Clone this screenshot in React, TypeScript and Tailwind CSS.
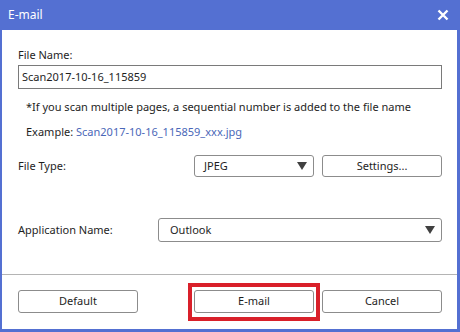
import React from "react";

const font = { fontFamily: '"Noto Sans", "Open Sans", sans-serif' };

function Arrow() {
  return (
    <svg width="10" height="8" viewBox="0 0 10 8">
      <polygon points="0,0 10,0 5,8" fill="#404040" />
    </svg>
  );
}

export default function App() {
  return (
    <div
      className="w-[460px] h-[332px] bg-[#5470d2] flex flex-col text-[11px] text-[#1e1e1e] overflow-hidden whitespace-nowrap"
      style={font}
    >
      <div className="h-[30px] flex items-center justify-between pl-[8px] pr-[11px] text-white text-[12px]">
        <span>E-mail</span>
        <svg width="12" height="12" viewBox="0 0 12 12">
          <path d="M1.5 1.5 L10.5 10.5 M10.5 1.5 L1.5 10.5" stroke="white" strokeWidth="2.4" />
        </svg>
      </div>
      <div className="flex-1 bg-white ml-[2px] mr-[3px] mb-[3px] flex flex-col">
        <div className="pl-[16px] pr-[15px] flex flex-col">
          <div className="mt-[17px] h-[16px] leading-[16px]">File Name:</div>
          <div className="mt-[2px] h-[24px] border border-[#7a7a7a] flex items-center pl-[3px]">
            Scan2017-10-16_115859
          </div>
          <div className="mt-[10px] h-[16px] leading-[16px] pl-[8px]">
            *If you scan multiple pages, a sequential number is added to the file name
          </div>
          <div className="mt-[9px] h-[16px] leading-[16px] pl-[8px]">
            Example: <span className="text-[#4a67b8]">Scan2017-10-16_115859_xxx.jpg</span>
          </div>
          <div className="mt-[15px] flex items-center">
            <div className="flex-1">File Type:</div>
            <div className="w-[120px] h-[22px] border border-[#8c8c8c] rounded-[3px] flex items-center justify-between pl-[9px] pr-[6px]">
              <span>JPEG</span>
              <Arrow />
            </div>
            <div className="ml-[8px] w-[120px] h-[22px] border border-[#8c8c8c] rounded-[3px] flex items-center justify-center">
              Settings...
            </div>
          </div>
          <div className="mt-[41px] flex items-center">
            <div className="w-[140px]">Application Name:</div>
            <div className="flex-1 h-[24px] border border-[#8c8c8c] rounded-[3px] flex items-center justify-between pl-[11px] pr-[6px]">
              <span>Outlook</span>
              <Arrow />
            </div>
          </div>
        </div>
        <div className="mt-[32px] h-px bg-[#b4b4b4]" />
        <div className="mt-[15px] pl-[16px] pr-[15px] flex">
          <div className="w-[120px] h-[23px] border border-[#8c8c8c] rounded-[3px] flex items-center justify-center">
            Default
          </div>
          <div className="ml-[56px] relative w-[120px] h-[23px] border border-[#8c8c8c] rounded-[3px] flex items-center justify-center">
            E-mail
            <div className="absolute left-[-7px] right-[-7px] top-[-8px] bottom-[-9px] border-[4px] border-[#d9202a]" />
          </div>
          <div className="ml-[8px] w-[120px] h-[23px] border border-[#8c8c8c] rounded-[3px] flex items-center justify-center">
            Cancel
          </div>
        </div>
      </div>
    </div>
  );
}
